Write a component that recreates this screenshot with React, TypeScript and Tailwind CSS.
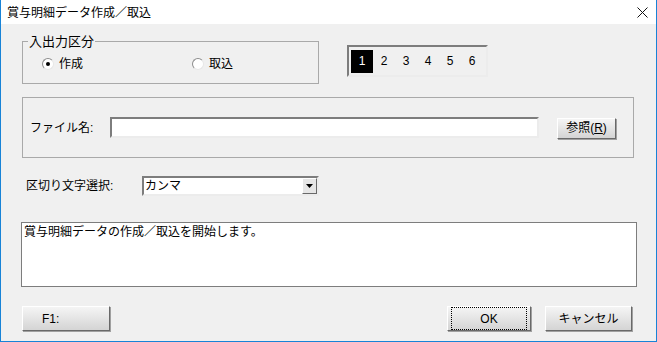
import React from "react";

const font = { fontFamily: '"Liberation Sans", "Noto Sans CJK JP", sans-serif' };

const Radio: React.FC<{ checked?: boolean; label: string }> = ({ checked, label }) => (
  <div className="flex items-center">
    <div className="w-[12px] h-[12px] rounded-full border border-t-[#8c8c8c] border-l-[#8c8c8c] border-b-[#e6e6e6] border-r-[#e6e6e6] bg-white flex items-center justify-center">
      {checked && <div className="w-[4px] h-[4px] rounded-full bg-black" />}
    </div>
    <span className="ml-[5px] text-[12px] leading-[14px]">{label}</span>
  </div>
);

const Button: React.FC<{ label: React.ReactNode; className?: string; focused?: boolean }> = ({
  label,
  className = "",
  focused,
}) => (
  <div
    className={`flex items-center justify-center border border-t-white border-l-white border-b-[#696969] border-r-[#696969] bg-gradient-to-b from-[#f5f5f5] to-[#d4d4d4] shadow-[1px_1px_0_#a0a0a0] text-[12px] leading-[14px] ${className}`}
  >
    {focused ? (
      <div className="w-full h-full m-[3px] border border-dotted border-black flex items-center justify-center">
        {label}
      </div>
    ) : (
      label
    )}
  </div>
);

const sunken =
  "border-2 border-t-[#7d7d7d] border-l-[#7d7d7d] border-b-[#ececec] border-r-[#ececec]";

export default function App() {
  return (
    <div className="w-[657px] h-[342px] bg-[#f0f0f0] text-black overflow-hidden" style={font}>
      <div className="w-full h-full flex flex-col border-x border-b border-[#1883d7]">
        {/* title bar */}
        <div className="h-[24px] bg-white flex items-center shrink-0">
          <span className="ml-[6px] mt-[1px] text-[12px] leading-[14px]">賞与明細データ作成／取込</span>
          <svg className="ml-auto mr-[8px]" width="11" height="11" viewBox="0 0 11 11">
            <path d="M0.5 0.5 L10.5 10.5 M10.5 0.5 L0.5 10.5" stroke="#111" strokeWidth="1" />
          </svg>
        </div>

        {/* row 1 */}
        <div className="flex items-start mt-[17px] ml-[21px]">
          <div className="relative w-[297px] h-[43px] border border-[#a9a9a9] shrink-0">
            <span className="absolute left-[5px] top-[-8px] px-[1px] bg-[#f0f0f0] text-[13px] leading-[15px]">
              入出力区分
            </span>
            <div className="flex items-center mt-[15px] ml-[19px]">
              <Radio checked label="作成" />
              <div className="ml-[109px]">
                <Radio label="取込" />
              </div>
            </div>
          </div>
          <div className={`ml-[28px] mt-[4px] w-[141px] h-[32px] flex items-center shrink-0 ${sunken}`}>
            <div className="ml-[2px] w-[22px] h-[23px] bg-black text-white flex items-center justify-center text-[12px]">
              1
            </div>
            {["2", "3", "4", "5", "6"].map((n) => (
              <span key={n} className="w-[22px] text-center text-[12px]">
                {n}
              </span>
            ))}
          </div>
        </div>

        {/* file group */}
        <div className="mt-[13px] ml-[21px] w-[612px] h-[61px] border border-[#a9a9a9] flex items-center">
          <span className="ml-[7px] w-[80px] shrink-0 text-[12px] leading-[14px]">ファイル名:</span>
          <div className={`w-[429px] h-[21px] shrink-0 bg-white ${sunken}`} />
          <Button
            label={
              <span>
                参照(<span className="underline">R</span>)
              </span>
            }
            className="ml-[18px] w-[59px] h-[21px] mt-[1px] shrink-0"
          />
        </div>

        {/* separator select */}
        <div className="mt-[18px] ml-[25px] flex items-center">
          <span className="w-[116px] shrink-0 text-[12px] leading-[14px]">区切り文字選択:</span>
          <div className={`w-[177px] h-[20px] shrink-0 bg-white flex items-center ${sunken}`}>
            <span className="ml-[1px] text-[12px] leading-[14px]">カンマ</span>
            <div className="ml-auto w-[15px] h-full border border-t-white border-l-white border-b-[#696969] border-r-[#696969] bg-[#e6e6e6] flex items-center justify-center">
              <svg width="7" height="4" viewBox="0 0 7 4">
                <path d="M0 0 H7 L3.5 4 Z" fill="#000" />
              </svg>
            </div>
          </div>
        </div>

        {/* message */}
        <div className="mt-[26px] ml-[20px] w-[616px] h-[65px] bg-white border border-[#7d7d7d]">
          <p className="ml-[2px] mt-[2px] text-[12px] leading-[14px]">
            賞与明細データの作成／取込を開始します。
          </p>
        </div>

        {/* buttons */}
        <div className="mt-[19px] ml-[21px] flex items-center">
          <Button label="F1:" className="w-[88px] h-[25px] justify-start pl-[19px] shrink-0" />
          <Button label="OK" focused className="ml-[337px] w-[84px] h-[25px] shrink-0" />
          <Button label="キャンセル" className="ml-[14px] w-[87px] h-[25px] shrink-0" />
        </div>
      </div>
    </div>
  );
}
